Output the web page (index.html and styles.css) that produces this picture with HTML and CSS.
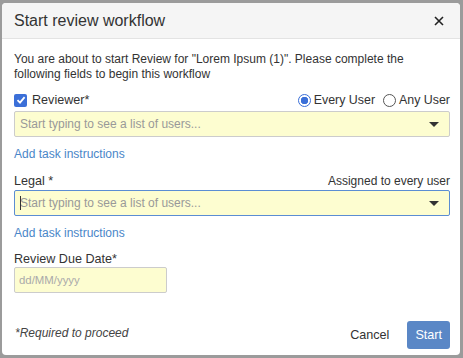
FILE: index.html
```html
<!DOCTYPE html>
<html lang="en">
<head>
    <meta charset="UTF-8">
    <title>Start review workflow</title>
    <link rel="stylesheet" href="styles.css">
</head>
<body>
    <div class="dialog">
        <div class="dialog-header">
            <h1 class="dialog-title">Start review workflow</h1>
            <svg class="close" width="10" height="10" viewBox="0 0 10 10"><path d="M1 1 L9 9 M9 1 L1 9" stroke="#222" stroke-width="1.6"/></svg>
        </div>

        <div class="dialog-body">
            <p class="intro">You are about to start Review for "Lorem Ipsum (1)". Please complete the following fields to begin this workflow</p>

            <div class="field-head">
                <label class="check-label">
                    <span class="checkbox">
                        <svg width="10" height="10" viewBox="0 0 10 10"><path d="M1.5 5.2 L4 7.6 L8.6 2.2" fill="none" stroke="#fff" stroke-width="1.8"/></svg>
                    </span>
                    Reviewer*
                </label>
                <div class="radios">
                    <span class="radio-item"><span class="radio checked"></span>Every User</span>
                    <span class="radio-item"><span class="radio"></span>Any User</span>
                </div>
            </div>
            <div class="select">
                <span class="placeholder">Start typing to see a list of users...</span>
                <span class="caret"></span>
            </div>
            <a class="link">Add task instructions</a>

            <div class="field-head legal-head">
                <span class="field-label">Legal *</span>
                <span class="note">Assigned to every user</span>
            </div>
            <div class="select focused">
                <span class="cursor"></span>
                <span class="placeholder">Start typing to see a list of users...</span>
                <span class="caret"></span>
            </div>
            <a class="link">Add task instructions</a>

            <div class="field-label due-label">Review Due Date*</div>
            <div class="date-input"><span class="placeholder">dd/MM/yyyy</span></div>
        </div>

        <div class="dialog-footer">
            <span class="required">*Required to proceed</span>
            <div class="buttons">
                <span class="btn-cancel">Cancel</span>
                <span class="btn-start">Start</span>
            </div>
        </div>
    </div>
</body>
</html>
```

FILE: styles.css
```css
* {
    margin: 0;
    padding: 0;
    box-sizing: border-box;
    font-family: 'Liberation Sans', Arial, sans-serif;
}

body {
    background-color: #9b9b9b;
    padding: 3px 3px 0 2px;
    height: 358px;
    overflow: hidden;
}

.dialog {
    background-color: #fff;
    border-radius: 4px;
    width: 458px;
    height: 352px;
    display: flex;
    flex-direction: column;
    overflow: hidden;
}

.dialog-header {
    background-color: #f5f5f5;
    border-bottom: 1px solid #e3e3e3;
    height: 36px;
    display: flex;
    align-items: center;
    justify-content: space-between;
    padding: 1px 16px 0 12px;
}

.dialog-title {
    font-size: 16px;
    font-weight: normal;
    color: #333;
}

.dialog-body {
    padding: 13px 10px 0 12px;
    color: #333;
    font-size: 12px;
}

.intro {
    line-height: 15px;
    margin-bottom: 10px;
}

.field-head {
    display: flex;
    justify-content: space-between;
    align-items: center;
    height: 16px;
    margin-bottom: 3px;
}

.check-label {
    display: flex;
    align-items: center;
    font-size: 12.6px;
    color: #333;
}

.checkbox {
    width: 13px;
    height: 13px;
    background-color: #3b6fd8;
    border-radius: 2px;
    display: inline-flex;
    align-items: center;
    justify-content: center;
    margin-right: 5px;
}

.radios {
    display: flex;
    gap: 8px;
    font-size: 12.4px;
}

.radio-item {
    display: flex;
    align-items: center;
}

.radio {
    width: 13px;
    height: 13px;
    border: 1px solid #555;
    border-radius: 50%;
    margin-right: 3px;
}

.radio.checked {
    border: 1px solid #3b6fd8;
    background: radial-gradient(circle, #3b6fd8 0, #3b6fd8 3.5px, #fff 4px);
}

.select {
    background-color: #fdfdd0;
    border: 1px solid #ccc;
    border-radius: 2px;
    height: 26px;
    display: flex;
    align-items: center;
    padding: 0 10px 0 5px;
    position: relative;
}

.select.focused {
    border-color: #5b8dd3;
}

.cursor {
    width: 1px;
    height: 14px;
    background-color: #333;
    position: absolute;
    left: 5px;
}

.placeholder {
    flex: 1;
    color: #999;
    font-size: 12px;
}

.caret {
    width: 0;
    height: 0;
    border-left: 5px solid transparent;
    border-right: 5px solid transparent;
    border-top: 5px solid #333;
}

.link {
    display: block;
    color: #4a86c8;
    font-size: 12px;
    margin: 10px 0 12px 0;
}

.legal-head {
    margin-bottom: 1px;
}

.field-label {
    font-size: 12.6px;
    color: #333;
}

.note {
    font-size: 12px;
    color: #333;
}

.due-label {
    margin-top: 2px;
    margin-bottom: 1px;
}

.date-input {
    width: 153px;
    height: 26px;
    background-color: #fdfdd0;
    border: 1px solid #ccc;
    border-radius: 2px;
    display: flex;
    align-items: center;
    padding-left: 4px;
}

.date-input .placeholder {
    font-size: 11.4px;
    color: #aaa;
}

.dialog-footer {
    margin-top: auto;
    display: flex;
    justify-content: space-between;
    align-items: center;
    padding: 0 10px 6px 13px;
}

.required {
    font-size: 12px;
    font-style: italic;
    color: #444;
    margin-top: -5px;
}

.buttons {
    display: flex;
    align-items: center;
    gap: 18px;
}

.btn-cancel {
    font-size: 12.6px;
    color: #333;
}

.btn-start {
    background-color: #5a87c6;
    color: #fff;
    font-size: 12.6px;
    border-radius: 3px;
    padding: 0 8px;
    height: 28px;
    display: flex;
    align-items: center;
}
```
